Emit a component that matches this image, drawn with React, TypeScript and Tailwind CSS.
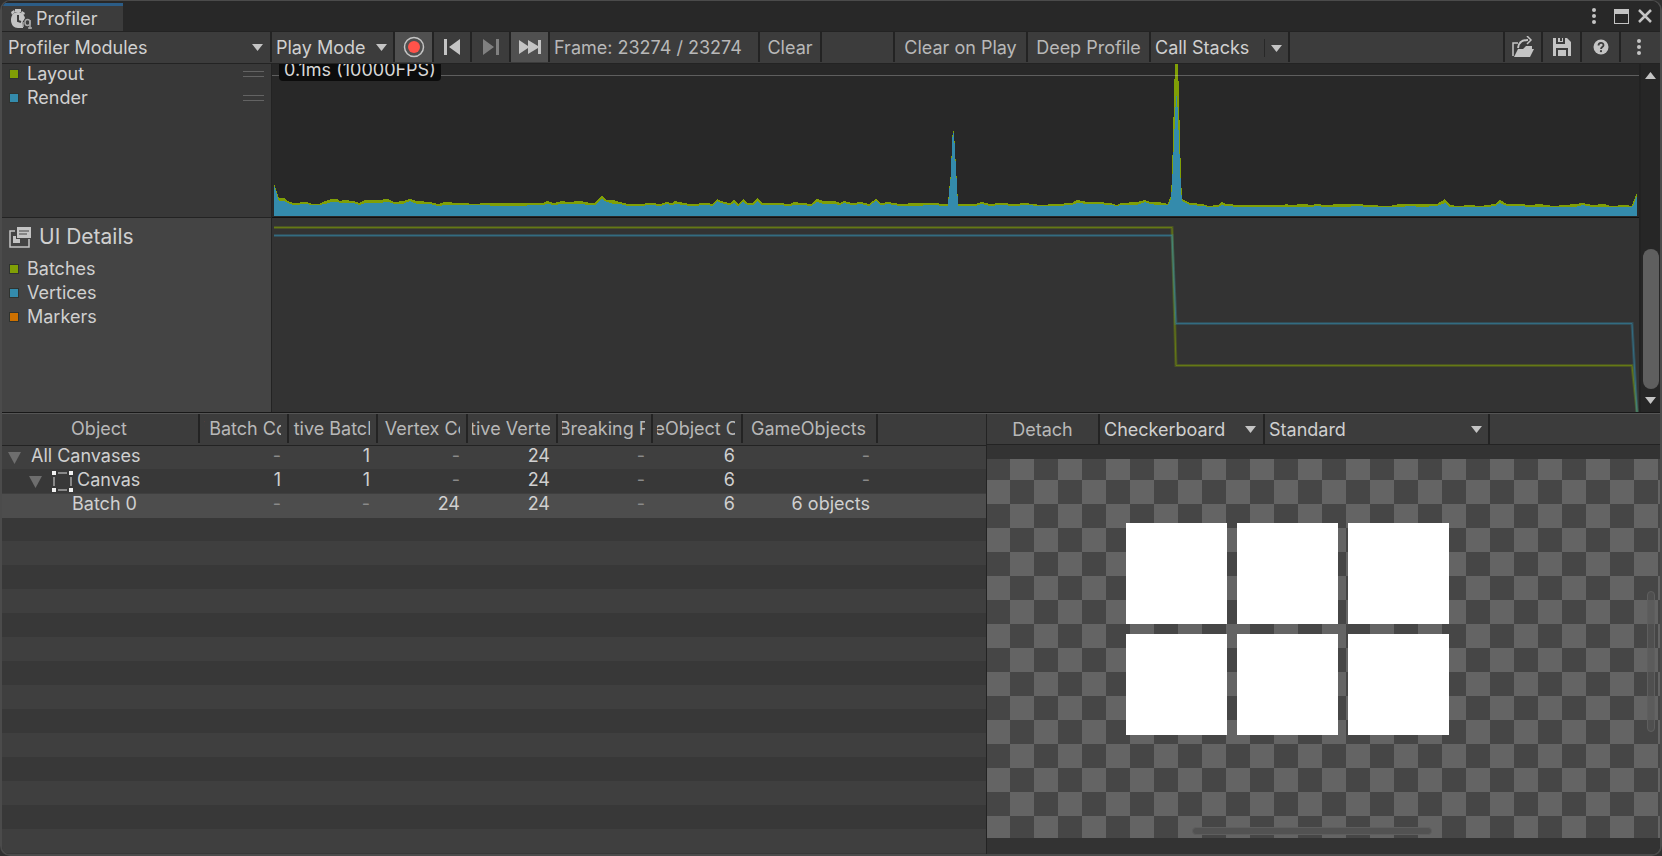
import React from 'react';
import clsx from 'clsx';

type Sample = [x: number, total: number, render?: number];

// x, height of the whole stack, height of the render part (when not total - 2)
const samples: Sample[] = [
  [2, 33], [3, 30], [5, 23], [7, 18, 15], [12, 18, 15], [16, 15, 13], [21, 13], [34, 14, 12], [40, 12, 11], [47, 12, 11],
  [53, 15, 12], [59, 17, 14], [65, 17, 14], [68, 15, 13], [72, 16, 13], [81, 15, 13], [87, 13, 11], [93, 16, 13], [106, 16, 13],
  [116, 17, 14], [122, 14, 12], [131, 15, 12], [138, 17, 15], [145, 15, 12], [158, 14, 12], [166, 12, 10], [173, 14, 11],
  [187, 13, 11], [206, 12, 11], [210, 13, 11], [226, 13, 10], [239, 13, 10], [271, 13], [275, 15, 12], [282, 13], [290, 15, 12],
  [296, 14], [308, 15, 12], [318, 13], [323, 13], [326, 17, 14], [330, 20, 17], [335, 16, 14], [341, 16, 12], [348, 14, 12],
  [356, 12, 10], [366, 12, 10], [380, 13, 11], [388, 12, 10], [394, 14], [400, 13], [403, 15, 12], [412, 13, 11], [418, 12],
  [436, 13, 11], [440, 12], [445, 17, 15], [452, 14], [458, 13], [462, 16, 13], [466, 12], [471, 17, 14], [476, 13], [481, 13],
  [485, 18, 15], [490, 13], [506, 13, 11], [518, 12, 10], [522, 14, 11], [530, 13, 11], [539, 12, 10], [545, 17, 14],
  [551, 15, 12], [562, 15, 12], [568, 13], [572, 15, 13], [580, 13], [589, 14, 12], [597, 12], [604, 17, 15], [609, 13],
  [616, 14, 12], [628, 12, 10], [643, 13, 10], [658, 13, 11], [676, 12], [677, 26], [679, 43], [680, 76], [681, 85], [682, 85],
  [683, 66], [684, 48], [685, 32], [686, 12], [703, 12], [710, 14, 12], [718, 12], [728, 13], [743, 12], [753, 13, 11],
  [769, 11, 10], [783, 12, 10], [800, 13, 11], [805, 16, 13], [816, 14, 12], [826, 14, 12], [838, 13, 11], [845, 11, 10],
  [849, 13, 11], [865, 14, 11], [873, 16, 14], [878, 14, 12], [886, 14, 11], [896, 12, 11], [898, 18, 15], [899, 20, 17],
  [900, 42, 30], [901, 80, 53], [902, 118, 75], [903, 156, 98], [904, 156, 120], [905, 156, 120], [906, 156, 98],
  [907, 116, 75], [908, 78, 50], [909, 39, 27], [910, 17, 15], [918, 13, 11], [931, 12, 10], [936, 10, 9], [946, 11, 9],
  [950, 14, 11], [954, 12, 10], [968, 11, 9], [1012, 11, 9], [1014, 12, 9], [1018, 11, 9], [1032, 12, 9], [1039, 11, 9],
  [1045, 12, 10], [1052, 11, 9], [1070, 12, 9], [1088, 12, 10], [1093, 11, 9], [1118, 10, 9], [1127, 12, 9], [1138, 12, 10],
  [1149, 12, 9], [1165, 12, 10], [1173, 17, 13], [1178, 11, 9], [1186, 10, 9], [1197, 11, 9], [1208, 10, 9], [1215, 11, 9],
  [1223, 12, 10], [1228, 16, 13], [1235, 12, 10], [1248, 12, 10], [1258, 11, 9], [1268, 12, 9], [1281, 10, 9], [1303, 12, 9],
  [1311, 13, 11], [1320, 11, 9], [1332, 12, 9], [1339, 10, 9], [1353, 11, 9], [1360, 10, 9], [1362, 16, 12], [1364, 21, 18],
  [1365, 23, 20],
];

const BASE = 152;

const area = (pick: (s: Sample) => number) =>
  `M2 ${BASE} ` + samples.map((s) => `L${s[0]} ${BASE - pick(s)}`).join(' ') + ` L1365 ${BASE}Z`;

const columns = [
  { label: 'Object', width: 'w-[198px]' },
  { label: 'Self Batch Count', width: 'w-[89px]' },
  { label: 'Cumulative Batch Count', width: 'w-[89px]' },
  { label: 'Self Vertex Count', width: 'w-[90px]' },
  { label: 'Cumulative Vertex Count', width: 'w-[90px]' },
  { label: 'Batch Breaking Reason', width: 'w-[95px]' },
  { label: 'GameObject Count', width: 'w-[90px]' },
  { label: 'GameObjects', width: 'w-[135px]' },
];

const rows = [
  { name: 'All Canvases', level: 0, values: ['-', '1', '-', '24', '-', '6', '-'] },
  { name: 'Canvas', level: 1, values: ['1', '1', '-', '24', '-', '6', '-'] },
  { name: 'Batch 0', level: 2, values: ['-', '-', '24', '24', '-', '6', '6 objects'], selected: true },
];

const Arrow: React.FC<{ className?: string; up?: boolean }> = ({ className, up }) => (
  <svg width="11" height="7" viewBox="0 0 11 7" className={clsx('shrink-0 fill-[#c4c4c4]', className)} aria-hidden="true">
    <path d={up ? 'M0 7 5.5 0 11 7Z' : 'M0 0h11L5.500 7Z'} />
  </svg>
);

const Kebab = () => (
  <svg width="4" height="16" viewBox="0 0 4 16" className="fill-[#c4c4c4]" aria-hidden="true">
    <circle cx="2" cy="2" r="2" />
    <circle cx="2" cy="8" r="2" />
    <circle cx="2" cy="14" r="2" />
  </svg>
);

interface ToolButtonProps {
  className?: string;
  label?: string;
  active?: boolean;
  disabled?: boolean;
  children: React.ReactNode;
}

const ToolButton: React.FC<ToolButtonProps> = ({ className, label, active, disabled, children }) => (
  <button
    type="button"
    aria-label={label}
    disabled={disabled}
    className={clsx(
      'flex h-[30px] shrink-0 items-center justify-center whitespace-nowrap border-r-2 border-[#232323]',
      active ? 'bg-[#505050]' : 'bg-[#3c3c3c]',
      !label && 'pt-[2px]',
      className,
    )}
  >
    {children}
  </button>
);

interface ToolSelectProps {
  label: string;
  options: string[];
  className?: string;
  selectClass?: string;
  arrowClass?: string;
}

const ToolSelect: React.FC<ToolSelectProps> = ({ label, options, className, selectClass, arrowClass }) => (
  <div className={clsx('relative flex h-[30px] shrink-0 items-center border-r-2 border-[#232323]', className)}>
    <select
      aria-label={label}
      className={clsx('h-full w-full appearance-none bg-transparent pt-[2px] text-[#d0d0d0]', selectClass)}
    >
      {options.map((option) => (
        <option key={option}>{option}</option>
      ))}
    </select>
    <Arrow className={clsx('pointer-events-none absolute', arrowClass)} />
  </div>
);

const TitleBar = () => (
  <header className="flex h-[30px] items-end justify-between bg-[#282828]">
    <div className="flex h-7 w-[121px] items-center gap-1 border-t-[3px] border-[#2c5d87] bg-[#3c3c3c] pl-2 text-[#d0d0d0]">
      <svg width="22" height="22" viewBox="0 0 22 22" aria-hidden="true">
        <path d="M5 1h6v3H5Z M1 4l3-2 1 2-3 3Z M12 3l3 2-1 2-3-2Z" fill="#c4c4c4" />
        <path d="M8 4c-4 0-7 3-7 8s3 8 7 8h5v-3l-1-2 3-5c-1-4-4-6-7-6Z" fill="#c4c4c4" />
        <path d="M8 7v6l3 1" stroke="#3c3c3c" strokeWidth="2" fill="none" />
        <path d="M13 14v5" stroke="#a8a8a8" strokeWidth="1.500" />
        <ellipse cx="17.500" cy="14.500" rx="2.500" ry="3" stroke="#a8a8a8" strokeWidth="1.500" fill="#3c3c3c" />
        <path d="M20 12v9M18 20h4" stroke="#a8a8a8" strokeWidth="1.500" />
      </svg>
      <span>Profiler</span>
    </div>
    <div className="flex h-full items-center gap-[9px] pr-2">
      <button type="button" aria-label="Window menu" className="mr-[9px] flex h-4 w-1 items-center">
        <Kebab />
      </button>
      <button type="button" aria-label="Maximize">
        <svg width="15" height="15" viewBox="0 0 15 15" aria-hidden="true">
          <path d="M0 0h15v15H0ZM1 5v9h13V5Z" fill="#c4c4c4" fillRule="evenodd" />
        </svg>
      </button>
      <button type="button" aria-label="Close">
        <svg width="14" height="14" viewBox="0 0 14 14" aria-hidden="true">
          <path d="M1 1l12 12M13 1 1 13" stroke="#c4c4c4" strokeWidth="2.500" />
        </svg>
      </button>
    </div>
  </header>
);

const Toolbar = () => (
  <div role="toolbar" aria-label="Profiler" className="flex h-[33px] items-start border-y border-[#232323] bg-[#3c3c3c]">
    <ToolSelect
      label="Modules"
      options={['Profiler Modules']}
      className="w-[270px]"
      selectClass="pl-[6px]"
      arrowClass="right-[7px]"
    />
    <ToolSelect label="Target" options={['Play Mode']} className="w-[123px]" selectClass="pl-1" arrowClass="right-[6px]" />
    <ToolButton label="Record" className="w-[39px]" active>
      <svg width="22" height="22" viewBox="0 0 22 22" aria-hidden="true">
        <circle cx="11" cy="11" r="9.500" stroke="#c4c4c4" strokeWidth="1.500" fill="none" />
        <circle cx="11" cy="11" r="6" fill="#ff534a" />
      </svg>
    </ToolButton>
    <ToolButton label="Previous frame" className="w-[38px]">
      <svg width="16" height="16" viewBox="0 0 16 16" className="fill-[#c4c4c4]" aria-hidden="true">
        <path d="M0 0h3v16H0ZM16 0v16L5 8Z" />
      </svg>
    </ToolButton>
    <ToolButton label="Next frame" className="w-[39px]" disabled>
      <svg width="16" height="16" viewBox="0 0 16 16" className="fill-[#808080]" aria-hidden="true">
        <path d="M13 0h3v16h-3ZM0 0v16L11 8Z" />
      </svg>
    </ToolButton>
    <ToolButton label="Current frame" className="w-[39px]" active>
      <svg width="22" height="14" viewBox="0 0 22 14" className="fill-[#c4c4c4]" aria-hidden="true">
        <path d="M0 0 9 6V0L19 6V0h3v14h-3V8L9 14V8L0 14Z" />
      </svg>
    </ToolButton>
    <span className="flex h-[30px] w-[210px] shrink-0 items-center border-r-2 border-[#232323] pl-1 pt-[2px] text-[#b8b8b8]">
      Frame: 23274 / 23274
    </span>
    <ToolButton className="w-[62px] text-[#b8b8b8]">Clear</ToolButton>
    <div className="h-[30px] w-[73px] shrink-0 border-r-2 border-[#232323]" />
    <ToolButton className="w-[133px] text-[#b8b8b8]">Clear on Play</ToolButton>
    <ToolButton className="w-[123px] text-[#b8b8b8]">Deep Profile</ToolButton>
    <ToolButton className="w-[139px] text-[#d0d0d0]">
      <span className="flex-1 pl-1 text-left">Call Stacks</span>
      <span className="h-[18px] w-px bg-[#282828]" />
      <Arrow className="mx-[6px]" />
    </ToolButton>
    <div className="h-[30px] flex-1 border-r-2 border-[#232323]" />
    <ToolButton label="Load" className="w-[38px]">
      <svg width="22" height="22" viewBox="0 0 22 22" aria-hidden="true">
        <path d="M6 7H1v13" stroke="#c4c4c4" strokeWidth="1.500" fill="none" />
        <path d="M6 12c1-7 5-8 10-8" stroke="#c4c4c4" strokeWidth="2" fill="none" />
        <path d="M15 0l4 4-4 4" stroke="#c4c4c4" strokeWidth="1.500" fill="none" />
        <path d="M2 21 6 13h5l3-3h6v3h2L18 21Z" fill="#c4c4c4" />
      </svg>
    </ToolButton>
    <ToolButton label="Save" className="w-[39px]">
      <svg width="18" height="18" viewBox="0 0 18 18" aria-hidden="true">
        <path
          d="M0 0h3v6h9V0h2l4 4v14h-3v-8H3v8H0ZM5 0h2v3h2V0h1v4H5ZM5 12h8v6H5Z"
          fill="#c4c4c4"
        />
      </svg>
    </ToolButton>
    <ToolButton label="Help" className="w-[39px]">
      <svg width="16" height="16" viewBox="0 0 16 16" aria-hidden="true">
        <circle cx="8" cy="8" r="7.500" fill="#c4c4c4" />
        <path d="M5.500 6.500C5.500 3 10.500 3 10.500 6.200 10.500 8 8 8 8 10" stroke="#3c3c3c" strokeWidth="1.800" fill="none" />
        <circle cx="8" cy="12.200" r="1.100" fill="#3c3c3c" />
      </svg>
    </ToolButton>
    <button type="button" aria-label="More" className="flex h-[30px] w-[39px] shrink-0 items-center justify-center pr-1">
      <Kebab />
    </button>
  </div>
);

const LegendItem: React.FC<{ name: string; color: string; handle?: boolean }> = ({ name, color, handle }) => (
  <li className="flex h-6 items-center pl-[7px] pr-[7px]">
    <span className={clsx('size-[10px] border border-[#2f3330]', color)} />
    <span className="flex-1 pl-2">{name}</span>
    {handle && <span className="h-[6px] w-[21px] border-y border-[#636363]" />}
  </li>
);

const Charts = () => (
  <section className="flex h-[349px] shrink-0 border-b border-[#181818]">
    <div className="min-w-0 flex-1">
      <div className="flex h-[154px]">
        <div className="w-[270px] shrink-0 overflow-hidden border-b border-r border-[#232323] bg-[#383838] text-[#d0d0d0]">
          <ul className="-mt-[2px]">
            <LegendItem name="Layout" color="bg-[#809f06]" handle />
            <LegendItem name="Render" color="bg-[#348bac]" handle />
          </ul>
        </div>
        <div className="relative min-w-0 flex-1 overflow-hidden border-b border-[#111111] bg-[#282828]">
          <svg viewBox="0 0 1367 153" preserveAspectRatio="none" shapeRendering="crispEdges" className="h-full w-full">
            <path d={area((s) => s[1])} fill="#809f06" />
            <path d={area((s) => s[2] ?? s[1] - 2)} fill="#348bac" />
            <rect x="0" y="11" width="1367" height="1" fill="#ffffff" opacity="0.25" />
          </svg>
          <span className="absolute -top-[6px] left-[7px] h-[23px] rounded-sm bg-[#0c0c0c] px-[5px] text-[#d8d8d8]">
            0.1ms (10000FPS)
          </span>
        </div>
      </div>
      <div className="flex h-[194px]">
        <div className="w-[270px] shrink-0 border-r border-[#232323] bg-[#444444] text-[#d0d0d0]">
          <h2 className="flex h-[39px] items-center gap-2 pb-[2px] pl-[7px] text-[21px]">
            <svg width="22" height="22" viewBox="0 0 22 22" aria-hidden="true">
              <path d="M6 5H1v16h19v-8" stroke="#c4c4c4" strokeWidth="1.500" fill="none" />
              <path d="M8 1h14v11H8Z" fill="#c4c4c4" />
              <path d="M10 5h10M10 8h8" stroke="#444444" strokeWidth="1" />
              <path d="M4 10h3v3h4v4H4Z" fill="#c4c4c4" />
            </svg>
            UI Details
          </h2>
          <ul>
            <LegendItem name="Batches" color="bg-[#809f06]" />
            <LegendItem name="Vertices" color="bg-[#348bac]" />
            <LegendItem name="Markers" color="bg-[#cc7000]" />
          </ul>
        </div>
        <div className="min-w-0 flex-1 bg-[#333333]">
          <svg viewBox="0 0 1367 194" preserveAspectRatio="none" className="h-full w-full" fill="none">
            <path d="M2 9.500H900L904 147.500H1360L1365 194" stroke="#809f06" strokeWidth="3" opacity="0.300" />
            <path d="M2 9.500H900L904 147.500H1360L1365 194" stroke="#809f06" strokeWidth="1" opacity="0.500" />
            <path d="M2 17.500H900L904 105.500H1360L1365 194" stroke="#348bac" strokeWidth="3" opacity="0.300" />
            <path d="M2 17.500H900L904 105.500H1360L1365 194" stroke="#348bac" strokeWidth="1" opacity="0.500" />
          </svg>
        </div>
      </div>
    </div>
    <div className="flex w-[21px] shrink-0 flex-col items-center border-l-2 border-[#222222] bg-[#262626] py-2">
      <Arrow up />
      <div className="mb-2 mt-auto h-[140px] w-4 rounded-full bg-[#5f5f5f]" />
      <Arrow />
    </div>
  </section>
);

const CanvasIcon = () => (
  <svg width="21" height="21" viewBox="0 0 21 21" className="shrink-0" aria-hidden="true">
    <path d="M6 2h9M6 19h9M2 6v9M19 6v9" stroke="#d8d8d8" strokeWidth="1" />
    <path d="M0 0h4v4H0ZM17 0h4v4h-4ZM0 17h4v4H0ZM17 17h4v4h-4Z" fill="#f0f0f0" />
  </svg>
);

const BatchTable = () => (
  <div className="min-w-0 flex-1 overflow-hidden">
    <div className="h-full bg-[#3c3c3c]">
      <div className="h-full bg-[repeating-linear-gradient(#3f3f3f_0_24px,#383838_24px_48px)] bg-[position:0_31px] bg-no-repeat">
        <table className="w-full table-fixed border-collapse">
          <thead>
            <tr className="h-[31px] border-b border-[#232323] bg-[#3c3c3c] text-[#b8b8b8]">
              {columns.map((column) => (
                <th key={column.label} scope="col" className={clsx('p-0 align-top font-normal', column.width)}>
                  <div className="h-[29px] border-r-2 border-[#232323] pl-1 pr-[6px]">
                    <div className="flex h-full items-center justify-center overflow-hidden whitespace-nowrap">
                      {column.label}
                    </div>
                  </div>
                </th>
              ))}
              <td />
            </tr>
          </thead>
          <tbody>
            {rows.map((row) => (
              <tr key={row.name} className={clsx('h-6 text-[#d0d0d0]', row.selected && 'bg-[#4d4d4d]')}>
                <th scope="row" className="p-0 font-normal">
                  <div
                    className={clsx(
                      'flex h-6 items-center',
                      row.level === 0 && 'pl-[6px]',
                      row.level === 1 && 'pl-[27px]',
                      row.level === 2 && 'pl-[70px]',
                    )}
                  >
                    {row.level < 2 && (
                      <svg width="13" height="12" viewBox="0 0 13 12" className="mr-[10px] fill-[#6e6e6e]" aria-hidden="true">
                        <path d="M0 0h13L6.500 12Z" />
                      </svg>
                    )}
                    {row.level === 1 && <CanvasIcon />}
                    <span className={clsx('pb-1 leading-5', row.level === 1 && 'pl-1')}>{row.name}</span>
                  </div>
                </th>
                {row.values.map((value, i) => (
                  <td
                    key={columns[i + 1].label}
                    className={clsx('p-0 pb-1 pr-2 text-right leading-5', value === '-' && 'text-[#8a8a8a]')}
                  >
                    {value}
                  </td>
                ))}
                <td />
              </tr>
            ))}
          </tbody>
        </table>
      </div>
    </div>
  </div>
);

const Preview = () => (
  <div className="flex w-[674px] shrink-0 flex-col border-l border-[#232323] bg-[#333333]">
    <div className="flex h-[31px] items-start border-b border-[#232323] bg-[#3c3c3c]">
      <ToolButton className="w-[113px] text-[#b8b8b8]">Detach</ToolButton>
      <ToolSelect
        label="Background"
        options={['Checkerboard']}
        className="w-[165px]"
        selectClass="pl-1"
        arrowClass="right-[7px]"
      />
      <ToolSelect label="View" options={['Standard']} className="w-[225px]" selectClass="pl-1" arrowClass="right-[6px]" />
    </div>
    <div className="relative mb-4 mt-[14px] flex-1 bg-[conic-gradient(#646464_25%,#464646_0_50%,#646464_0_75%,#464646_0)] bg-[length:48px_48px] bg-[position:-1px_-3px] pl-[139px] pt-16">
      <div className="grid w-[323px] grid-cols-3 gap-[10px]">
        {Array.from({ length: 6 }, (_, i) => (
          <div key={i} className="aspect-square bg-white" />
        ))}
      </div>
      <div className="absolute bottom-[3px] left-[205px] h-2 w-60 rounded-full border border-[#5e5e5e] bg-[#525252]" />
      <div className="absolute right-[5px] top-[132px] h-[141px] w-2 rounded-full border border-[#5e5e5e] bg-[#555555]/60" />
    </div>
  </div>
);

export default function App() {
  return (
    <div className="flex min-h-screen bg-[#303030] font-['Inter',sans-serif] text-[18px] leading-6 [font-optical-sizing:none]">
      <main className="flex min-w-0 flex-1 flex-col overflow-hidden rounded-[10px] border-2 border-t border-[#4b4b4b] bg-[#282828]">
        <TitleBar />
        <Toolbar />
        <Charts />
        <section className="flex flex-1 border-t border-[#555555]">
          <BatchTable />
          <Preview />
        </section>
      </main>
    </div>
  );
}
